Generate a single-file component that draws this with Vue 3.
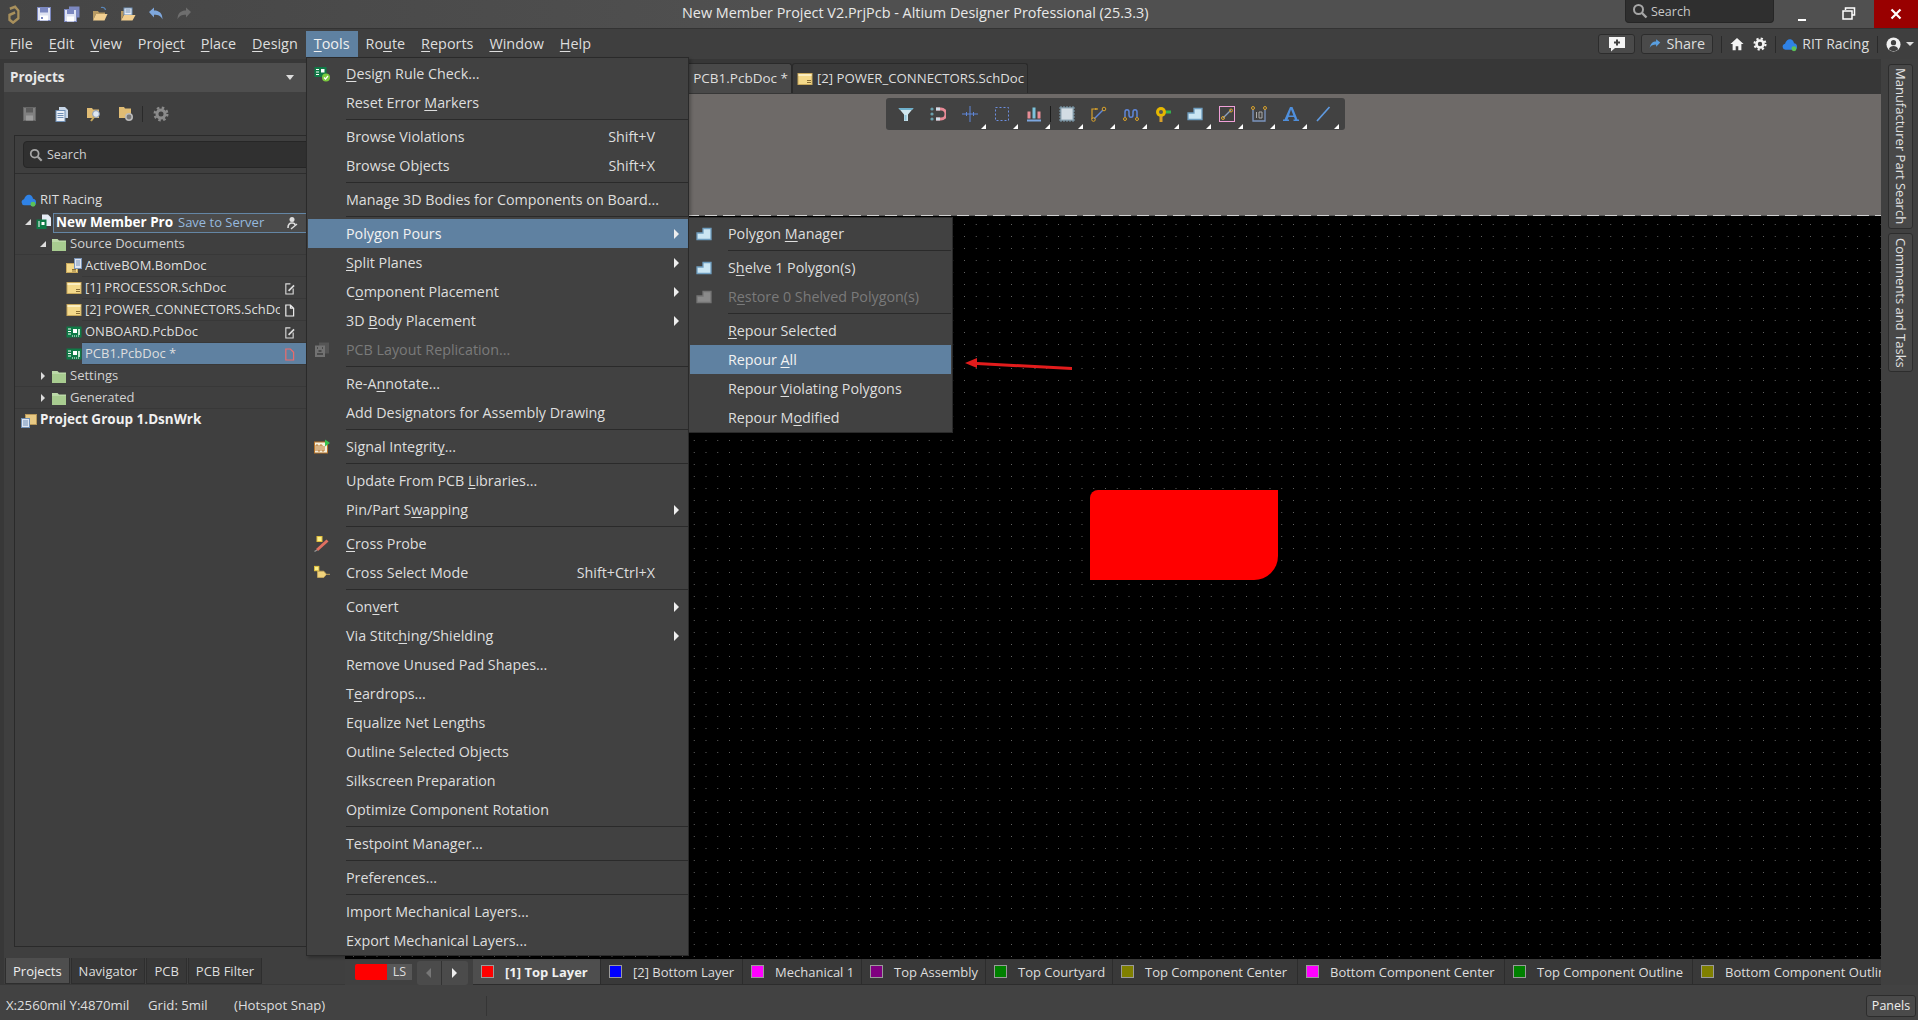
<script setup>
const menuBar = ['&File', '&Edit', '&View', 'Proje&ct', '&Place', '&Design', '&Tools', 'Ro&ute', '&Reports', '&Window', '&Help']

const toolsMenu = [
  { label: '&Design Rule Check...', icon: 'i-drc' },
  { label: 'Reset Error &Markers' },
  { sep: true },
  { label: 'Browse Violations', key: 'Shift+V' },
  { label: 'Browse Objects', key: 'Shift+X' },
  { sep: true },
  { label: 'Manage 3D Bodies for Components on Board...' },
  { sep: true },
  { label: 'Poly&gon Pours', sub: true, active: true },
  { label: '&Split Planes', sub: true },
  { label: 'C&omponent Placement', sub: true },
  { label: '3D &Body Placement', sub: true },
  { label: 'PCB Layout Replication...', disabled: true, icon: 'i-replicate' },
  { sep: true },
  { label: 'Re-A&nnotate...' },
  { label: 'Add Designators for Assembly Drawing' },
  { sep: true },
  { label: 'Signal Integrit&y...', icon: 'i-signal' },
  { sep: true },
  { label: 'Update From PCB &Libraries...' },
  { label: 'Pin/Part S&wapping', sub: true },
  { sep: true },
  { label: '&Cross Probe', icon: 'i-probe' },
  { label: 'Cross Select Mode', key: 'Shift+Ctrl+X', icon: 'i-crossselect' },
  { sep: true },
  { label: 'Con&vert', sub: true },
  { label: 'Via Stitc&hing/Shielding', sub: true },
  { label: 'Remove Unused Pad Shapes...' },
  { label: 'T&eardrops...' },
  { label: 'Equalize Net Lengths' },
  { label: 'Outline Selected Objects' },
  { label: 'Silkscreen Preparation' },
  { label: 'Optimize Component Rotation' },
  { sep: true },
  { label: 'Testpoint Manager...' },
  { sep: true },
  { label: 'Preferences...' },
  { sep: true },
  { label: 'Import Mechanical Layers...' },
  { label: 'Export Mechanical Layers...' }
]

const polygonMenu = [
  { label: 'Polygon &Manager', icon: 'i-polygon' },
  { sep: true },
  { label: 'S&helve 1 Polygon(s)', icon: 'i-polygon' },
  { label: 'R&estore 0 Shelved Polygon(s)', icon: 'i-polygon-off', disabled: true },
  { sep: true },
  { label: '&Repour Selected' },
  { label: 'Repour &All', active: true },
  { label: 'Repour &Violating Polygons' },
  { label: 'Repour M&odified' }
]

const tree = [
  { label: 'Source Documents', depth: 1, open: true, icon: 'i-folder' },
  { label: 'ActiveBOM.BomDoc', depth: 2, icon: 'i-bom' },
  { label: '[1] PROCESSOR.SchDoc', depth: 2, icon: 'i-sch', state: 'i-docedit' },
  { label: '[2] POWER_CONNECTORS.SchDoc', depth: 2, icon: 'i-sch', state: 'i-doc' },
  { label: 'ONBOARD.PcbDoc', depth: 2, icon: 'i-pcb', state: 'i-docedit' },
  { label: 'PCB1.PcbDoc *', depth: 2, icon: 'i-pcb', state: 'i-docred', selected: true },
  { label: 'Settings', depth: 1, closed: true, icon: 'i-folder' },
  { label: 'Generated', depth: 1, closed: true, icon: 'i-folder' }
]

const pcbTools = [
  { icon: 'i-filter' },
  { icon: 'i-magnet' },
  { icon: 'i-cross', more: true },
  { icon: 'i-select', more: true },
  { icon: 'i-bars', more: true, sepAfter: true },
  { icon: 'i-chip', more: true },
  { icon: 'i-route', more: true },
  { icon: 'i-meander', more: true },
  { icon: 'i-via', more: true },
  { icon: 'i-polygon', more: true },
  { icon: 'i-keepout', more: true },
  { icon: 'i-dimension', more: true },
  { icon: 'i-text', more: true },
  { icon: 'i-line', more: true }
]

const layers = [
  { label: '[1] Top Layer', color: '#ff0000', width: 128, active: true },
  { label: '[2] Bottom Layer', color: '#0000ff', width: 142 },
  { label: 'Mechanical 1', color: '#ff00ff', width: 119 },
  { label: 'Top Assembly', color: '#800080', width: 124 },
  { label: 'Top Courtyard', color: '#008000', width: 127 },
  { label: 'Top Component Center', color: '#808000', width: 185 },
  { label: 'Bottom Component Center', color: '#ff00ff', width: 207 },
  { label: 'Top Component Outline', color: '#008000', width: 188 },
  { label: 'Bottom Component Outline', color: '#808000', width: 200 }
]

const panelTabs = ['Projects', 'Navigator', 'PCB', 'PCB Filter']

// splits "Re-A&nnotate" into the parts around the underlined mnemonic
const mn = (text) => {
  const i = text.indexOf('&')
  if (i < 0) return [text, '', '']
  return [text.slice(0, i), text[i + 1], text.slice(i + 2)]
}
</script>

<template>
  <div class="app">
    <svg class="defs" aria-hidden="true">
      <symbol id="i-logo" viewBox="0 0 16 20" preserveAspectRatio="none"><path d="M3.500 4 10 1.800 14 6v8l-6.500 4.500L3 15.500V10.500L10 8" fill="none" stroke="#a8905c" stroke-width="2.800"/></symbol>
      <symbol id="i-save" viewBox="0 0 16 16"><rect x="1.500" y="1.500" width="13" height="13" fill="#dfe3f2" stroke="#7c88c0"/><rect x="4" y="2" width="8" height="4.500" fill="#7c88c0"/><rect x="4" y="9.500" width="8" height="5" fill="#fff"/><rect x="5" y="11" width="2" height="2" fill="#7c88c0"/></symbol>
      <symbol id="i-saveall" viewBox="0 0 16 16"><rect x="5" y="0.500" width="10.500" height="11" fill="#7c88c0"/><rect x="0.500" y="3.500" width="12" height="12" fill="#dfe3f2" stroke="#7c88c0"/><rect x="3" y="4" width="7" height="4" fill="#7c88c0"/><rect x="3" y="10.500" width="7" height="5" fill="#fff"/></symbol>
      <symbol id="i-open" viewBox="0 0 16 16"><path d="M1 5h5l1 1.500h6V8H4L1 14.500Z" fill="#b89a62"/><path d="M4 8h11.500l-3 6.500H1Z" fill="#f2cf90"/><path d="M9 1.500c2.500-.6 4 .4 4.500 2.500" fill="none" stroke="#5a86b8" stroke-width="1.200"/></symbol>
      <symbol id="i-openproj" viewBox="0 0 16 16"><path d="M1 5h3v3L1 14.500Z" fill="#b89a62"/><rect x="4" y="2" width="8" height="7" fill="#e8edf5" stroke="#6f8fb5"/><path d="M5.500 4h5M5.500 6h5" stroke="#6f8fb5"/><path d="M4 9h11.500l-3 5.500H1Z" fill="#f2cf90"/></symbol>
      <symbol id="i-undo" viewBox="0 0 16 16"><path d="M1 6 6 1.500v3c5 0 8.500 2.500 8.500 9-1.500-3.500-4-4.800-8.500-4.800v2.800Z" fill="#7ea7dc"/></symbol>
      <symbol id="i-redo" viewBox="0 0 16 16"><path d="M15 6 10 1.500v3c-5 0-8.500 2.500-8.500 9 1.500-3.500 4-4.800 8.500-4.800v2.800Z" fill="#6e6e6e"/></symbol>
      <symbol id="i-search" viewBox="0 0 16 16"><circle cx="6.500" cy="6.500" r="4.500" fill="none" stroke="#a6a6a6" stroke-width="2"/><path d="m10 10 4.500 4.500" stroke="#a6a6a6" stroke-width="2.400"/></symbol>
      <symbol id="i-bubble" viewBox="0 0 18 16"><path d="M1 1h16v11H7l-4 3.500V12H1Z" fill="#f4f4f4"/><path d="M9 3.500v6M6 6.500h6" stroke="#404040" stroke-width="2"/></symbol>
      <symbol id="i-share" viewBox="0 0 16 16"><path d="M15 6 9.500 1.500v3C5 4.500 2 7 1 13c2-3.500 4.500-4.300 8.500-4.300v2.800Z" fill="#5a9fe0"/></symbol>
      <symbol id="i-home" viewBox="0 0 16 16"><path d="M8 1 15.500 8H13v7H9.500v-4.500h-3V15H3V8H.5Z" fill="#f4f4f4"/></symbol>
      <symbol id="i-gear" viewBox="0 0 16 16"><circle cx="8" cy="8" r="4" fill="none" stroke="currentColor" stroke-width="3"/><circle cx="8" cy="8" r="6.300" fill="none" stroke="currentColor" stroke-width="2.400" stroke-dasharray="2.500 2.450"/></symbol>
      <symbol id="i-cloud" viewBox="0 0 18 16"><path d="M4 14a3.500 3.500 0 0 1-.6-6.900C4.500 3 8 1 10.500 2.500c2 1 2.800 2.500 3 4.200A3.700 3.700 0 0 1 14 14Z" fill="#2f82e6"/><circle cx="13.500" cy="12.800" r="2.800" fill="#5cc158"/></symbol>
      <symbol id="i-user" viewBox="0 0 16 16"><circle cx="8" cy="8" r="7.500" fill="#f0f0f0"/><circle cx="8" cy="6" r="2.800" fill="#404040"/><path d="M3 13c.8-2.800 2.800-3.500 5-3.500s4.200.7 5 3.500c-1.500 1.400-3 1.900-5 1.900s-3.500-.5-5-1.900Z" fill="#404040"/></symbol>
      <symbol id="i-folder" viewBox="0 0 14 16"><path d="M0 3h5.500L7 4.500h7V15H0Z" fill="#bcd9a8"/><path d="M0 6h14v9H0Z" fill="#a8cc90"/></symbol>
      <symbol id="i-sch" viewBox="0 0 16 16"><rect x="1" y="2.500" width="14" height="11" fill="#f4d98a" stroke="#c8a85c"/><rect x="1.500" y="3" width="13" height="2" fill="#fbeec0"/><path d="M10 9.500h4M10 11.500h4" stroke="#8a6f35"/></symbol>
      <symbol id="i-pcb" viewBox="0 0 16 16"><rect x="0.500" y="2.500" width="15" height="11" fill="#0f7a46"/><path d="M2 5h3M2 7.500h3M2 10h3" stroke="#fff"/><rect x="7" y="5" width="4" height="4" fill="#fff"/><rect x="12" y="5" width="2" height="6" fill="#bfe6cd"/><path d="M6 12h8" stroke="#fff" stroke-dasharray="1 1"/></symbol>
      <symbol id="i-project" viewBox="0 0 16 16"><path d="M6 0.500h6l3 3V12H6Z" fill="#e6ecf5"/><rect x="0.500" y="5.500" width="10" height="9.500" fill="#0f7a46"/><path d="M2 8h2M2 10h2M2 12h2" stroke="#fff"/><rect x="5.500" y="8" width="3" height="3" fill="#fff"/></symbol>
      <symbol id="i-bom" viewBox="0 0 16 16"><rect x="0.500" y="5.500" width="11" height="9" fill="#f4d98a" stroke="#c8a85c"/><path d="M6 11.500h4M6 13h4" stroke="#8a6f35"/><rect x="8.500" y="0.500" width="7" height="10" fill="#dfe6f2" stroke="#7b95b8"/><path d="M10 3h4M10 5h4M10 7h4" stroke="#7b95b8"/></symbol>
      <symbol id="i-group" viewBox="0 0 16 16"><rect x="4.500" y="2.500" width="11" height="10" fill="#e8c984" stroke="#b8985a"/><rect x="0.500" y="6.500" width="8" height="9" fill="#dfe6f2" stroke="#6f8fb5"/><path d="M2 9h5M2 11h5M2 13h5" stroke="#6f8fb5"/></symbol>
      <symbol id="i-doc" viewBox="0 0 12 14"><path d="M2 1h5l3.500 3.500V13H2Z M7 1v3.500h3.500" fill="none" stroke="#eee" stroke-width="1.300"/></symbol>
      <symbol id="i-docred" viewBox="0 0 12 14"><path d="M2 1h5l3.500 3.500V13H2Z" fill="none" stroke="#ee6b6b" stroke-width="1.300"/></symbol>
      <symbol id="i-docedit" viewBox="0 0 12 14"><path d="M7 2H2v11h8V7" fill="none" stroke="#ddd" stroke-width="1.200"/><path d="m5 9.500 6-6" stroke="#ddd" stroke-width="1.800"/></symbol>
      <symbol id="i-team" viewBox="0 0 12 14"><circle cx="6" cy="3.500" r="2.500" fill="#ddd"/><path d="M2 12c0-3 1.500-5 4-5s3 1 3 2" fill="none" stroke="#ddd" stroke-width="1.600"/><path d="m5 13 6-5" stroke="#ddd" stroke-width="1.400"/></symbol>
      <symbol id="i-findfolder" viewBox="0 0 16 16"><path d="M1 2h5l1 1.500h6V12H1Z" fill="#e0bc74"/><circle cx="10" cy="8" r="3.400" fill="#dfe8f2" stroke="#8a9cb5"/><path d="m8 11-3 4" stroke="#c8a85c" stroke-width="2"/></symbol>
      <symbol id="i-setfolder" viewBox="0 0 16 16"><path d="M1 1h5l1 1.500h6V12H1Z" fill="#e0bc74"/><circle cx="11" cy="11" r="3.200" fill="#777" stroke="#bbb" stroke-width="1.600"/></symbol>
      <symbol id="i-copydoc" viewBox="0 0 16 16"><path d="M5 1h6l3 3v8H5Z" fill="#c7d6e8"/><rect x="2" y="4.500" width="9" height="11" fill="#e9eff7" stroke="#6f8fb5"/><path d="M3.500 7.500h6M3.500 9.500h6M3.500 11.500h6" stroke="#6f8fb5"/></symbol>
      <symbol id="i-savegray" viewBox="0 0 16 16"><rect x="1.500" y="1.500" width="12" height="13" fill="#808080" stroke="#666"/><rect x="4" y="2" width="7" height="4.500" fill="#5c5c5c"/><rect x="4" y="9.500" width="7" height="5" fill="#9c9c9c"/></symbol>
      <symbol id="i-drc" viewBox="0 0 16 16"><rect x="0.500" y="1" width="12" height="10" fill="#0f7a46"/><path d="M2 3.500h3M2 6h3M2 8.500h3" stroke="#fff"/><rect x="7" y="3" width="3.500" height="3.500" fill="#fff"/><circle cx="12" cy="11.500" r="4" fill="#7ccb3f"/><path d="m10 11.500 1.500 1.500 2.500-3" fill="none" stroke="#fff" stroke-width="1.200"/></symbol>
      <symbol id="i-replicate" viewBox="0 0 16 16"><rect x="5" y="0.500" width="10" height="11" fill="#555"/><rect x="1" y="3.500" width="10" height="11.500" fill="#727272"/><path d="M3 6h1M8 6h1M3 12h6M4.500 9h3" stroke="#3e3e3e" stroke-width="1.500"/></symbol>
      <symbol id="i-signal" viewBox="0 0 16 16"><rect x="0.500" y="3" width="13" height="11" fill="#f5efdc" stroke="#b8752a"/><path d="M2 12V6h2v6h2V6h2v6h2V7" fill="none" stroke="#b8752a"/><path d="M11 .5l5 3.500-5 3.500Z" fill="#35c24e"/></symbol>
      <symbol id="i-probe" viewBox="0 0 16 16"><path d="M13.500 4.500 3 14" stroke="#e07060" stroke-width="3"/><path d="M3 14 .5 15.500" stroke="#999" stroke-width="1.200"/><rect x="3" y="0.500" width="5" height="5" fill="#fbf08a" stroke="#e2be3c"/></symbol>
      <symbol id="i-crossselect" viewBox="0 0 18 16"><path d="M4 6h7l3 3.500-3 3.500H4Z" fill="#f2d47c" stroke="#c8a85c"/><path d="M14 9.500h4" stroke="#c8a85c"/><rect x="0.500" y="0.500" width="5" height="5" fill="#fbf08a" stroke="#e2be3c"/></symbol>
      <symbol id="i-polygon" viewBox="0 0 16 16"><path d="M1 7h6V2.500h8v11H1Z" fill="#cbe6f3" stroke="#6f9ec0" stroke-width="1.300"/></symbol>
      <symbol id="i-polygon-off" viewBox="0 0 16 16"><path d="M1 7h6V2.500h8v11H1Z" fill="#8a8a8a" stroke="#747474" stroke-width="1.300"/></symbol>
      <symbol id="i-filter" viewBox="0 0 16 16"><path d="M0.500 2h15L10 8.500V15H6V8.500Z" fill="#cfe6ee"/><path d="M0.500 2h15l-1.500 2H2Z" fill="#6fb1cd"/><path d="M6.500 9h2v5.500h-2Z" fill="#8fc4da"/></symbol>
      <symbol id="i-magnet" viewBox="0 0 16 16"><circle cx="2" cy="3" r="1.600" fill="#6aa0ad"/><circle cx="2" cy="8" r="1.600" fill="#6aa0ad"/><circle cx="2" cy="13" r="1.600" fill="#6aa0ad"/><path d="M6 3h5a5 5 0 0 1 0 10H6" fill="none" stroke="#e78a96" stroke-width="3"/><path d="M6 3h4M6 13h4" stroke="#cfe0ea" stroke-width="3"/></symbol>
      <symbol id="i-cross" viewBox="0 0 16 16"><path d="M8 0v16M0 8h16" stroke="#5f86d8"/><path d="M4.500 6v4M11.500 6v4" stroke="#5f86d8"/></symbol>
      <symbol id="i-select" viewBox="0 0 16 16"><rect x="1.500" y="1.500" width="13" height="13" fill="none" stroke="#6c8fe0" stroke-dasharray="2 2"/></symbol>
      <symbol id="i-bars" viewBox="0 0 16 16"><rect x="1.500" y="5.500" width="3" height="7" fill="#e88d96"/><rect x="6.500" y="1.500" width="3" height="11" fill="#7cc3dc"/><rect x="11.500" y="5.500" width="3" height="7" fill="#e88d96"/><rect x="1" y="13.500" width="14" height="2" fill="#7da7e0"/></symbol>
      <symbol id="i-chip" viewBox="0 0 16 16"><path d="M2 0v16M5 0v16M8 0v16M11 0v16M14 0v16M0 2h16M0 5h16M0 8h16M0 11h16M0 14h16" stroke="#7fa0b4"/><rect x="2" y="2" width="12" height="12" fill="#d3dde4" stroke="#8fa6b4"/></symbol>
      <symbol id="i-route" viewBox="0 0 16 16"><path d="M1 13V3h6" fill="none" stroke="#d8a12c" stroke-width="1.200"/><path d="m4 2 3 1-3 1" fill="#d8a12c"/><path d="m3 13 9-9" stroke="#5f86d8" stroke-width="1.500"/><circle cx="2.500" cy="13.500" r="1.800" fill="none" stroke="#d8a12c"/><circle cx="13" cy="3" r="1.800" fill="none" stroke="#d8a12c"/></symbol>
      <symbol id="i-meander" viewBox="0 0 16 16"><path d="M2 11V6c0-3 4-3 4 0v3c0 3 4 3 4 0V6c0-3 4-3 4 0v5" fill="none" stroke="#5f86d8" stroke-width="1.500"/><circle cx="2" cy="13" r="1.500" fill="none" stroke="#d8a12c"/><circle cx="14" cy="13" r="1.500" fill="none" stroke="#d8a12c"/></symbol>
      <symbol id="i-via" viewBox="0 0 16 16"><circle cx="6" cy="6" r="5" fill="#e6b800"/><circle cx="6" cy="6" r="2" fill="#555"/><rect x="11" y="4.500" width="5" height="3" fill="#35b04e"/><rect x="4.500" y="10" width="3" height="6" fill="#d8a12c"/></symbol>
      <symbol id="i-keepout" viewBox="0 0 16 16"><rect x="0.500" y="0.500" width="15" height="15" fill="none" stroke="#f0a0d8"/><path d="m4 12 8-8" stroke="#8aa0c0" stroke-width="1.300"/><circle cx="4" cy="12" r="1.500" fill="none" stroke="#d8a12c"/><circle cx="12" cy="4.500" r="1.500" fill="none" stroke="#d8a12c"/></symbol>
      <symbol id="i-dimension" viewBox="0 0 16 16"><path d="M2 3v12h12V3" fill="none" stroke="#7b95c0" stroke-width="1.300"/><circle cx="2" cy="2" r="1.500" fill="none" stroke="#d8a12c"/><circle cx="14" cy="2" r="1.500" fill="none" stroke="#d8a12c"/><path d="M5.500 6v6M8 6h3v6H8Z" fill="none" stroke="#aaa"/></symbol>
      <symbol id="i-text" viewBox="0 0 16 16"><path d="M7 1h2.500L14.500 13.500H16V15h-5.500v-1.500H12L11 11H5.500l-1 2.500H6V15H0v-1.500h1.500ZM6 9.500h4.400L8 3.500Z" fill="#4f8fdc"/></symbol>
      <symbol id="i-line" viewBox="0 0 16 16"><path d="M2 15 14.500 1" stroke="#5f9ae0" stroke-width="1.700"/></symbol>
    </svg>

    <header class="titlebar">
      <div class="qat">
        <svg class="qat-logo"><use href="#i-logo" width="13" height="19" /></svg>
        <svg class="qat-ic"><use href="#i-save" /></svg>
        <svg class="qat-ic"><use href="#i-saveall" /></svg>
        <svg class="qat-ic"><use href="#i-open" /></svg>
        <svg class="qat-ic"><use href="#i-openproj" /></svg>
        <svg class="qat-ic"><use href="#i-undo" /></svg>
        <svg class="qat-ic"><use href="#i-redo" /></svg>
      </div>
      <div class="title">New Member Project V2.PrjPcb - Altium Designer Professional (25.3.3)</div>
      <div class="title-search">
        <svg class="ic16"><use href="#i-search" /></svg>
        <span>Search</span>
      </div>
      <div class="win-btn"><span class="win-min"></span></div>
      <div class="win-btn">
        <svg width="14" height="14" viewBox="0 0 14 14"><path d="M3.500 3V1h9v7H10M1 4h9v8H1Z" fill="none" stroke="#fff" stroke-width="1.500"/></svg>
      </div>
      <div class="win-close">
        <svg width="12" height="12" viewBox="0 0 12 12"><path d="m1.500 1.500 9 9m0-9-9 9" stroke="#fff" stroke-width="2.200"/></svg>
      </div>
    </header>

    <nav class="menubar">
      <span v-for="m in menuBar" :key="m" class="mb-item" :class="{ open: m === '&Tools' }">{{ mn(m)[0] }}<u>{{ mn(m)[1] }}</u>{{ mn(m)[2] }}</span>
      <div class="mb-right">
        <span class="mb-btn mb-bubble"><svg width="18" height="16"><use href="#i-bubble" /></svg></span>
        <span class="mb-btn mb-share"><svg class="ic12"><use href="#i-share" /></svg>Share</span>
        <i class="mb-sep"></i>
        <svg class="ic14"><use href="#i-home" /></svg>
        <svg class="ic14 mb-gear"><use href="#i-gear" /></svg>
        <i class="mb-sep"></i>
        <svg class="mb-cloud"><use href="#i-cloud" /></svg>
        <span class="mb-user">RIT Racing</span>
        <i class="mb-sep"></i>
        <svg class="ic14 mb-avatar"><use href="#i-user" /></svg>
        <i class="caret-down"></i>
      </div>
    </nav>

    <div class="workspace">
      <aside class="left">
        <section class="panel">
          <div class="panel-head">
            <span>Projects</span>
            <i class="caret-down small"></i>
          </div>
          <div class="panel-tools">
            <svg class="ic16"><use href="#i-savegray" /></svg>
            <svg class="ic16"><use href="#i-copydoc" /></svg>
            <svg class="ic16"><use href="#i-findfolder" /></svg>
            <svg class="ic16"><use href="#i-setfolder" /></svg>
            <i class="tool-sep"></i>
            <svg class="ic16 gear-gray"><use href="#i-gear" /></svg>
          </div>
          <div class="panel-box">
            <div class="panel-search">
              <div class="search-field">
                <svg class="ic14"><use href="#i-search" /></svg>
                <span>Search</span>
              </div>
            </div>
            <div class="tree">
              <div class="row root-row">
                <svg class="row-ic"><use href="#i-cloud" /></svg>
                <span class="row-label">RIT Racing</span>
              </div>
              <div class="row project-row">
                <i class="tw open"></i>
                <svg class="row-ic"><use href="#i-project" /></svg>
                <div class="project-box">
                  <b class="project-name">New Member Pro</b>
                  <span class="project-save">Save to Server</span>
                  <svg class="state-ic"><use href="#i-team" /></svg>
                </div>
              </div>
              <div
                v-for="item in tree"
                :key="item.label"
                class="row"
                :class="['depth-' + item.depth, { selected: item.selected }]"
              >
                <i v-if="item.depth === 1" class="tw" :class="{ open: item.open, closed: item.closed }"></i>
                <svg class="row-ic"><use :href="'#' + item.icon" /></svg>
                <span class="row-label">{{ item.label }}</span>
                <svg v-if="item.state" class="state-ic doc-state"><use :href="'#' + item.state" /></svg>
              </div>
              <div class="row root-row group-row">
                <svg class="row-ic"><use href="#i-group" /></svg>
                <b class="row-label">Project Group 1.DsnWrk</b>
              </div>
            </div>
          </div>
        </section>
        <div class="panel-tabs">
          <span v-for="(t, i) in panelTabs" :key="t" class="panel-tab" :class="{ active: i === 0 }">{{ t }}</span>
        </div>
      </aside>

      <main class="doc">
        <div class="doc-tabs">
          <span class="doc-tab active">PCB1.PcbDoc *</span>
          <span class="doc-tab">
            <svg class="ic16"><use href="#i-sch" /></svg>
            [2] POWER_CONNECTORS.SchDoc
          </span>
        </div>
        <div class="canvas">
          <div class="sheet-margin"></div>
          <div class="board-edge"></div>
          <div class="board">
            <div class="poly"></div>
            <svg class="callout" width="110" height="15" viewBox="0 0 110 15">
              <path d="M0 6 12 1V5L107 10V13L12 8V11Z" fill="#e21c1c"/>
            </svg>
          </div>
          <div class="float-bar">
            <template v-for="t in pcbTools" :key="t.icon">
              <span class="float-btn">
                <svg class="ic16"><use :href="'#' + t.icon" /></svg>
                <i v-if="t.more" class="more"></i>
              </span>
              <i v-if="t.sepAfter" class="float-sep"></i>
            </template>
          </div>
        </div>
        <div class="layer-row">
          <div class="ls">
            <span class="ls-color"></span>
            <span class="ls-text">LS</span>
          </div>
          <div class="layer-nav">
            <i class="nav-left"></i>
            <i class="nav-bar"></i>
            <i class="nav-right"></i>
          </div>
          <div class="layers">
            <span
              v-for="l in layers"
              :key="l.label"
              class="layer"
              :class="{ active: l.active }"
              :style="{ width: l.width + 'px' }"
            >
              <i class="swatch" :style="{ background: l.color }"></i>
              <span class="layer-name">{{ l.label }}</span>
            </span>
          </div>
        </div>
      </main>

      <aside class="rail">
        <span class="rail-tab rail-a">Manufacturer Part Search</span>
        <span class="rail-tab rail-b">Comments and Tasks</span>
      </aside>
    </div>

    <footer class="status">
      <span class="st-pos">X:2560mil Y:4870mil</span>
      <span class="st-grid">Grid: 5mil</span>
      <span class="st-snap">(Hotspot Snap)</span>
      <i class="st-sep"></i>
      <span class="st-panels">Panels</span>
    </footer>

    <!-- open menus, they sit over everything else -->
    <div class="menu tools-menu">
      <template v-for="(it, i) in toolsMenu" :key="i">
        <div v-if="it.sep" class="menu-sep"></div>
        <div v-else class="menu-item" :class="{ active: it.active, disabled: it.disabled }">
          <span class="menu-icon"><svg v-if="it.icon" class="ic16"><use :href="'#' + it.icon" /></svg></span>
          <span class="menu-label">{{ mn(it.label)[0] }}<u>{{ mn(it.label)[1] }}</u>{{ mn(it.label)[2] }}</span>
          <span v-if="it.key" class="menu-key">{{ it.key }}</span>
          <i v-if="it.sub" class="menu-arrow"></i>
        </div>
      </template>
    </div>

    <div class="menu polygon-menu">
      <template v-for="(it, i) in polygonMenu" :key="i">
        <div v-if="it.sep" class="menu-sep"></div>
        <div v-else class="menu-item" :class="{ active: it.active, disabled: it.disabled }">
          <span class="menu-icon"><svg v-if="it.icon" class="ic16"><use :href="'#' + it.icon" /></svg></span>
          <span class="menu-label">{{ mn(it.label)[0] }}<u>{{ mn(it.label)[1] }}</u>{{ mn(it.label)[2] }}</span>
        </div>
      </template>
    </div>
  </div>
</template>

<style>
html, body {
  margin: 0;
  background: #404040;
}
</style>

<style scoped>
.app {
  position: relative;
  width: 1918px;
  height: 1020px;
  display: flex;
  flex-direction: column;
  overflow: hidden;
  background: #404040;
  color: #dedede;
  font-family: "Open Sans", "Noto Sans", sans-serif;
  font-size: 13.5px;
  line-height: 1.2;
}

.defs {
  position: absolute;
  width: 0;
  height: 0;
}

svg {
  display: block;
  flex: none;
}

u {
  text-decoration-thickness: 1px;
  text-underline-offset: 2px;
}

.ic12 { width: 12px; height: 12px; }
.ic14 { width: 14px; height: 14px; }
.ic16 { width: 16px; height: 16px; }

/* title bar */
.titlebar {
  height: 29px;
  box-sizing: border-box;
  flex: none;
  display: flex;
  align-items: center;
  border-bottom: 1px solid #333;
  background: linear-gradient(90deg, #454545, #505050 40%, #505050);
}

.qat {
  width: 682px;
  flex: none;
  display: flex;
  align-items: center;
  gap: 12px;
  padding-left: 7px;
  box-sizing: border-box;
}

.qat-logo { width: 13px; height: 19px; margin-right: 4px; }
.qat-ic { width: 16px; height: 16px; }

.title {
  width: 460px;
  margin-bottom: 2px;
  font-size: 14.4px;
  white-space: nowrap;
  color: #e8e8e8;
}

.title-search {
  margin-left: auto;
  align-self: flex-start;
  width: 149px;
  height: 23px;
  box-sizing: border-box;
  display: flex;
  align-items: center;
  gap: 3px;
  padding-left: 6px;
  background: #2f2f2f;
  border: 1px solid #262626;
  border-top: 0;
  border-radius: 0 0 4px 4px;
  color: #c8c8c8;
  font-size: 12.5px;
}

.win-btn {
  width: 50px;
  display: flex;
  justify-content: center;
  align-items: center;
}

.win-min {
  width: 8px;
  height: 2px;
  margin: 11px 0 0 5px;
  background: #fff;
}

.win-close {
  width: 44px;
  height: 28px;
  display: flex;
  align-items: center;
  justify-content: center;
  background: #990000;
}

/* menu bar */
.menubar {
  height: 30px;
  flex: none;
  display: flex;
  align-items: center;
  padding-left: 2px;
  background: #3f3f3f;
  font-size: 14.4px;
}

.mb-item {
  padding: 0 8px;
  height: 26px;
  line-height: 26px;
  white-space: nowrap;
}

.mb-item.open {
  background: #5f81a1;
  color: #f0f0f0;
}

.mb-right {
  margin-left: auto;
  display: flex;
  align-items: center;
  height: 30px;
  padding-right: 4px;
}

.mb-btn {
  height: 20px;
  display: flex;
  align-items: center;
  justify-content: center;
  box-sizing: border-box;
  background: #4a4a4a;
  border: 1px solid #2c2c2c;
  border-radius: 3px;
}

.mb-bubble { width: 37px; margin-right: 6px; }
.mb-share { width: 72px; gap: 5px; }
.mb-sep {
  width: 1px;
  height: 17px;
  margin: 0 8px;
  background: #2a2a2a;
}

.mb-gear { margin-left: 9px; color: #f4f4f4; }
.mb-cloud { width: 16px; height: 15px; margin-left: -2px; }
.mb-user { margin-left: 4px; white-space: nowrap; font-size: 14px; }
.mb-avatar { width: 15px; height: 15px; }

.caret-down {
  width: 0;
  height: 0;
  margin-left: 5px;
  border-left: 4px solid transparent;
  border-right: 4px solid transparent;
  border-top: 4px solid #ddd;
}

/* main area */
.workspace {
  flex: 1;
  min-height: 0;
  display: flex;
}

.left {
  width: 345px;
  flex: none;
  box-sizing: border-box;
  padding: 4px 0 1px 4px;
  display: flex;
  flex-direction: column;
  background: #383838;
}

.panel {
  flex: 1;
  min-height: 0;
  display: flex;
  flex-direction: column;
  background: #3f3f3f;
}

.panel-head {
  height: 29px;
  flex: none;
  display: flex;
  align-items: center;
  padding: 0 0 0 6px;
  background: #4e4e4e;
  font-weight: 700;
  color: #e8e8e8;
}

.caret-down.small {
  margin-left: 221px;
  border-top-width: 5px;
}

.panel-tools {
  height: 43px;
  flex: none;
  display: flex;
  align-items: center;
  gap: 16px;
  padding-left: 18px;
  box-sizing: border-box;
}

.tool-sep {
  width: 1px;
  height: 16px;
  margin: 0 -6px 0 -8px;
  background: #2a2a2a;
}

.gear-gray { color: #8a8a8a; }

.panel-box {
  flex: 1;
  min-height: 0;
  margin: 0 0 11px 10px;
  border: 1px solid #2a2a2a;
}

.panel-search {
  height: 38px;
  box-sizing: border-box;
  padding: 5px 8px 0;
  border-bottom: 1px solid #2e2e2e;
}

.search-field {
  height: 27px;
  box-sizing: border-box;
  display: flex;
  align-items: center;
  gap: 4px;
  padding-left: 5px;
  background: #303030;
  border: 1px solid #262626;
  border-radius: 4px;
  font-size: 12.5px;
  color: #cfcfcf;
}

.tree {
  padding-top: 15px;
  font-size: 13px;
  line-height: 22px;
}

.row {
  height: 22px;
  display: flex;
  align-items: center;
  white-space: nowrap;
  box-sizing: border-box;
  position: relative;
}

.row-ic {
  width: 16px;
  height: 16px;
  flex: none;
}

.row-label {
  overflow: hidden;
  flex: 1;
  min-width: 0;
  margin-top: -2px;
}

.root-row { padding-left: 6px; gap: 3px; }
.group-row b { color: #f0f0f0; font-size: 13.5px; }

.project-row { padding-left: 10px; }

.project-box {
  flex: 1;
  height: 20px;
  margin-top: 2px;
  margin-left: 1px;
  display: flex;
  align-items: center;
  box-sizing: border-box;
  padding-left: 2px;
  background: #4b4b4b;
  border: 1px solid #6486a5;
  border-right: 0;
  line-height: 18px;
}

.project-name {
  width: 117px;
  overflow: hidden;
  color: #fff;
  font-size: 13.5px;
  margin-top: -2px;
}

.project-save {
  color: #96b9de;
  margin: -2px 0 0 5px;
  width: 108px;
}

.state-ic {
  width: 12px;
  height: 14px;
}

.tw {
  width: 0;
  height: 0;
  margin-right: 5px;
  border-style: solid;
}

.tw.open {
  border-width: 0 0 6px 6px;
  border-color: transparent transparent #ddd transparent;
}

.tw.closed {
  border-width: 4px 0 4px 4px;
  border-color: transparent transparent transparent #ddd;
  margin-right: 3px;
  margin-left: 1px;
}

.depth-1 {
  padding-left: 25px;
  gap: 4px;
  color: #d2d2d2;
  border-bottom: 1px solid #383838;
}

.depth-1 .tw.open { margin-right: 2px; }
.depth-1 .row-ic { width: 14px; }

.depth-2 {
  padding-left: 51px;
  gap: 3px;
}

.depth-2::after {
  content: "";
  position: absolute;
  left: 67px;
  right: 0;
  bottom: 0;
  height: 1px;
  background: #383838;
}

.depth-2 .row-label {
  flex: none;
  width: 195px;
}

.doc-state {
  margin-left: 1px;
  width: 11px;
  height: 13px;
}

.depth-2.selected::before {
  content: "";
  position: absolute;
  left: 67px;
  right: 0;
  top: 0;
  bottom: 0;
  background: #5f81a1;
}

.depth-2.selected .row-ic,
.depth-2.selected .row-label,
.depth-2.selected .doc-state {
  position: relative;
}

.panel-tabs {
  height: 26px;
  flex: none;
  display: flex;
  padding-left: 1px;
  background: #3f3f3f;
}

.panel-tab {
  display: flex;
  align-items: center;
  justify-content: center;
  padding: 2px 7px 0;
  box-sizing: border-box;
  background: #383838;
  border: 1px solid #2e2e2e;
  border-top: 0;
  margin-right: 1px;
  font-size: 13px;
  white-space: nowrap;
}

.panel-tab.active {
  background: #4e4e4e;
  color: #eee;
}

/* document area */
.doc {
  flex: 1;
  min-width: 0;
  display: flex;
  flex-direction: column;
}

.doc-tabs {
  height: 35px;
  flex: none;
  display: flex;
  align-items: flex-end;
  box-sizing: border-box;
  padding: 4px 0 1px 300px;
  background: #373737;
}

.doc-tab {
  height: 30px;
  display: flex;
  align-items: center;
  gap: 4px;
  box-sizing: border-box;
  white-space: nowrap;
  padding: 0 3px 0 4px;
  border: 1px solid #2a2a2a;
  border-bottom: 0;
  border-radius: 3px 3px 0 0;
  background: #3a3a3a;
  font-size: 13.2px;
}

.doc-tab.active {
  width: 147px;
  justify-content: flex-end;
  background: #494949;
  font-size: 13.5px;
}

.canvas {
  position: relative;
  flex: 1;
  min-height: 0;
  display: flex;
  flex-direction: column;
}

.sheet-margin {
  height: 121px;
  flex: none;
  background: #6e6a68;
}

.board-edge {
  height: 1px;
  flex: none;
  background: repeating-linear-gradient(90deg, #cfcfcf 0 12px, #555 12px 18px);
}

.board {
  position: relative;
  flex: 1;
  background-color: #000;
  background-image: radial-gradient(circle at 0.5px 0.5px, #626262 0.6px, transparent 0.8px);
  background-size: 11.75px 12px;
  background-position: 8px 8px;
}

/* the copper pour on the board */
.poly {
  position: absolute;
  left: 745px;
  top: 274px;
  width: 188px;
  height: 90px;
  background: #f00;
  border-radius: 8px 0 24px 0;
}

/* red annotation arrow drawn on the screenshot */
.callout {
  position: absolute;
  left: 620px;
  top: 141px;
}

.float-bar {
  position: absolute;
  left: 541px;
  top: 4px;
  height: 32px;
  display: flex;
  align-items: center;
  padding: 0 6px 0 4px;
  background: #424242;
  border-radius: 3px;
}

.float-btn {
  position: relative;
  width: 32px;
  height: 32px;
  display: flex;
  align-items: center;
  justify-content: center;
}

.more {
  position: absolute;
  right: 0;
  bottom: 1px;
  width: 0;
  height: 0;
  border-left: 5px solid transparent;
  border-bottom: 5px solid #fff;
}

.float-sep {
  width: 1px;
  height: 16px;
  background: #1c1c1c;
}

.layer-row {
  height: 26px;
  flex: none;
  display: flex;
  padding-left: 10px;
  background: #404040;
}

.ls {
  display: flex;
  height: 16px;
  margin-top: 5px;
  width: 57px;
}

.ls-color {
  width: 32px;
  background: #f00;
  border-radius: 2px 0 0 2px;
}

.ls-text {
  flex: 1;
  background: #585858;
  text-align: center;
  line-height: 16px;
  font-size: 12.5px;
}

.layer-nav {
  width: 51px;
  height: 24px;
  margin: 2px 5px 0 5px;
  display: flex;
  align-items: center;
  justify-content: space-between;
  box-sizing: border-box;
  padding: 0 11px 0 9px;
  background: #4b4b4b;
  border-radius: 3px;
}

.nav-left {
  width: 0;
  height: 0;
  border-top: 5px solid transparent;
  border-bottom: 5px solid transparent;
  border-right: 5px solid #777;
}

.nav-right {
  width: 0;
  height: 0;
  border-top: 5px solid transparent;
  border-bottom: 5px solid transparent;
  border-left: 5px solid #eee;
}

.nav-bar {
  width: 1px;
  height: 100%;
  background: #333;
}

.layers {
  flex: 1;
  min-width: 0;
  display: flex;
  overflow: hidden;
}

.layer {
  flex: none;
  height: 26px;
  display: flex;
  align-items: center;
  gap: 11px;
  box-sizing: border-box;
  padding-left: 8px;
  background: #393939;
  border-right: 1px solid #2c2c2c;
  border-bottom: 1px solid #2c2c2c;
  white-space: nowrap;
  font-size: 13px;
  overflow: hidden;
}

.layer-name { padding-top: 2px; }

.layer.active {
  background: #4e4e4e;
  font-weight: 700;
  color: #f0f0f0;
}

.swatch {
  width: 13px;
  height: 13px;
  flex: none;
  box-sizing: border-box;
  border: 1px solid #9a9a9a;
}

.rail {
  width: 37px;
  flex: none;
  display: flex;
  flex-direction: column;
  align-items: flex-end;
  gap: 4px;
  padding: 5px 5px 0 0;
  box-sizing: border-box;
  background: #404040;
}

.rail-tab {
  width: 25px;
  box-sizing: border-box;
  writing-mode: vertical-rl;
  text-align: center;
  line-height: 23px;
  background: #484848;
  border: 1px solid #2d2d2d;
  border-radius: 3px;
  font-size: 13px;
  white-space: nowrap;
  color: #e2e2e2;
}

.rail-a { height: 165px; }
.rail-b { height: 139px; }

/* status bar */
.status {
  height: 35px;
  flex: none;
  box-sizing: border-box;
  padding-top: 6px;
  display: flex;
  align-items: center;
  background: #424242;
  font-size: 13.2px;
  white-space: nowrap;
}

.st-pos { margin-left: 6px; width: 142px; }
.st-grid { width: 86px; }
.st-snap { width: 252px; }

.st-sep {
  width: 1px;
  height: 20px;
  background: #353535;
}

.st-panels {
  margin-left: auto;
  margin-right: 2px;
  width: 50px;
  height: 22px;
  box-sizing: border-box;
  display: flex;
  align-items: center;
  justify-content: center;
  background: #4a4a4a;
  border: 1px solid #2c2c2c;
  border-radius: 3px;
  color: #eee;
  font-size: 12.5px;
}

/* popups */
.menu {
  position: absolute;
  box-sizing: border-box;
  background: #414141;
  border: 1px solid #2a2a2a;
  font-size: 14.3px;
  box-shadow: 2px 2px 3px rgba(0, 0, 0, 0.25);
}

.tools-menu {
  left: 306px;
  top: 57px;
  width: 383px;
  padding: 1px 0 0 1px;
}

.polygon-menu {
  left: 688px;
  top: 217px;
  width: 265px;
  padding: 1px 1px 0 1px;
}

.menu-item {
  height: 29px;
  display: flex;
  align-items: center;
  position: relative;
  white-space: nowrap;
  color: #dedede;
}

.menu-item.active {
  background: #5f81a1;
  color: #f2f2f2;
}

.menu-item.disabled {
  color: #7a7a7a;
}

.menu-icon {
  width: 38px;
  flex: none;
  box-sizing: border-box;
  padding-left: 6px;
}

.menu-label {
  flex: 1;
  padding-top: 1px;
}

.menu-key {
  margin-right: 33px;
  padding-top: 1px;
}

.menu-arrow {
  width: 0;
  height: 0;
  margin-right: 9px;
  border-top: 5px solid transparent;
  border-bottom: 5px solid transparent;
  border-left: 5px solid #eee;
}

.menu-sep {
  height: 5px;
  box-sizing: border-box;
  padding-top: 2px;
  margin-left: 38px;
}

.menu-sep::before {
  content: "";
  display: block;
  height: 1px;
  background: #2a2a2a;
}
</style>
